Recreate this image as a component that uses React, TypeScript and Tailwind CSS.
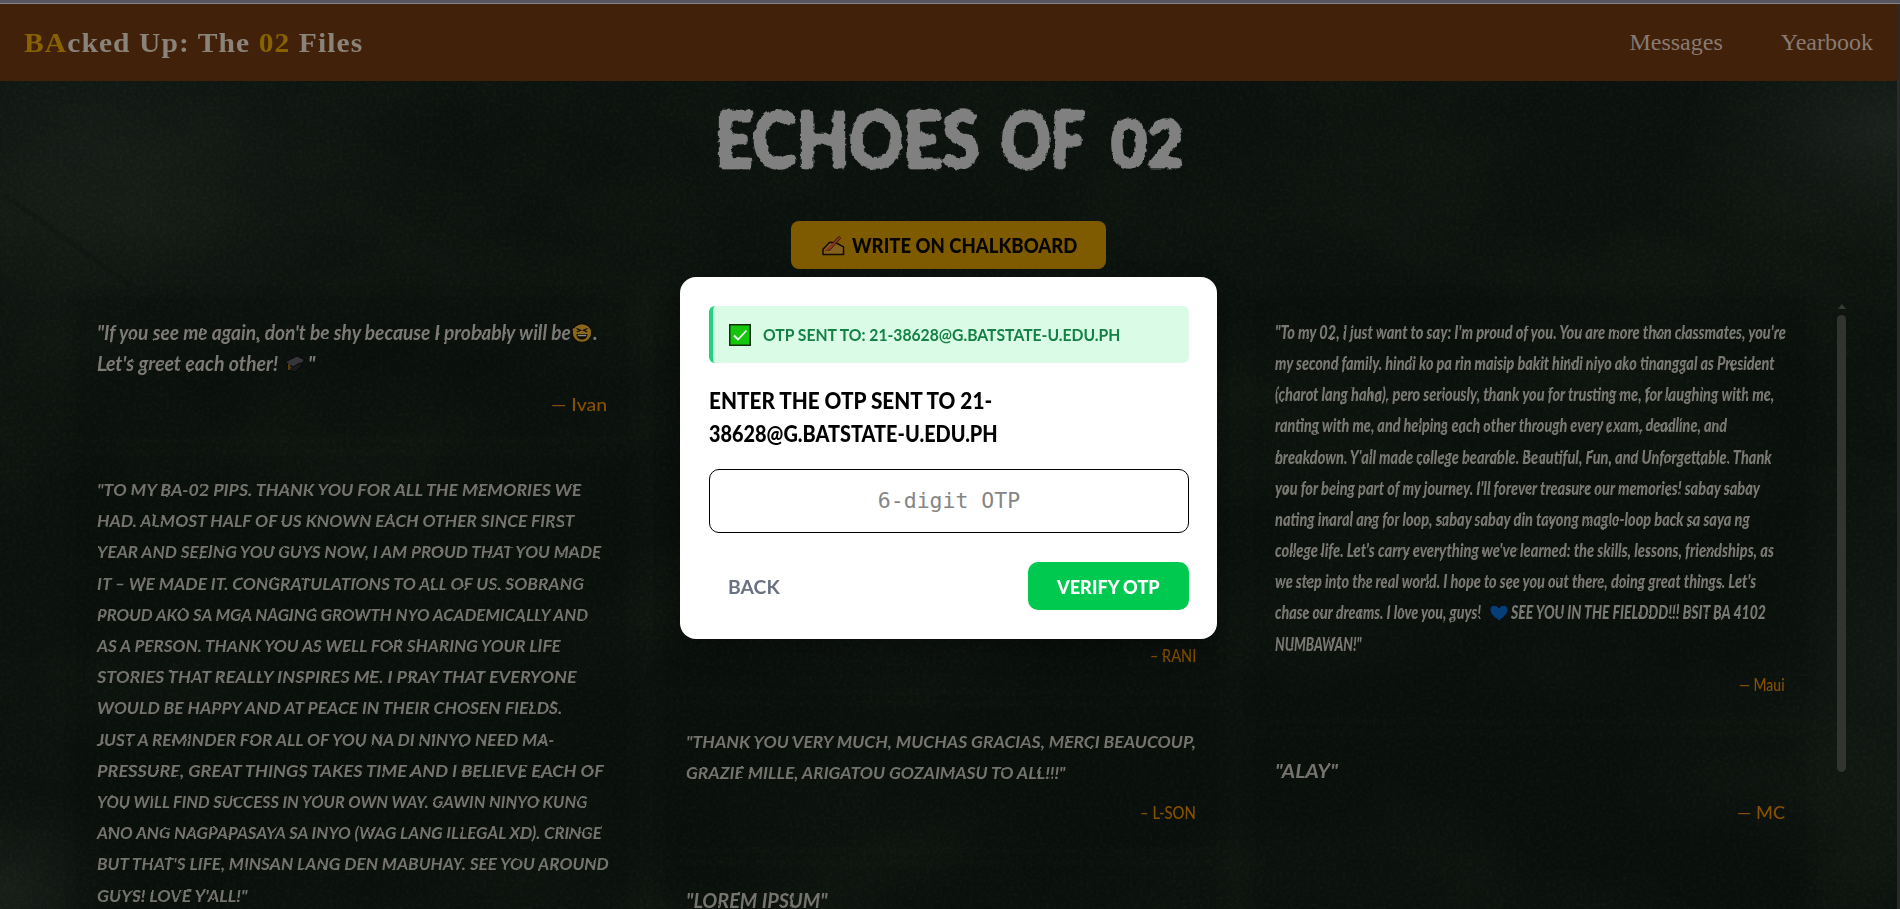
import { ReactNode, useLayoutEffect, useRef } from "react";

/** A single line of text squeezed or stretched to an exact measure. */
function Fit({ w, children, right = false }: { w: number; children: ReactNode; right?: boolean }) {
  const ref = useRef<HTMLSpanElement>(null);
  useLayoutEffect(() => {
    const el = ref.current;
    if (!el) return;
    el.style.transform = "scaleX(" + w / el.offsetWidth + ")";
  }, [w]);
  return (
    <span className={right ? "flex justify-end" : "flex justify-start"} style={{ width: w }}>
      <span
        ref={ref}
        className={
          right
            ? "inline-block shrink-0 origin-right whitespace-pre"
            : "inline-block shrink-0 origin-left whitespace-pre"
        }
      >
        {children}
      </span>
    </span>
  );
}

const pips: [string, number][] = [
  ["\"TO MY BA-02 PIPS. THANK YOU FOR ALL THE MEMORIES WE", 485],
  ["HAD. ALMOST HALF OF US KNOWN EACH OTHER SINCE FIRST", 477],
  ["YEAR AND SEEING YOU GUYS NOW, I AM PROUD THAT YOU MADE", 504],
  ["IT – WE MADE IT. CONGRATULATIONS TO ALL OF US. SOBRANG", 487],
  ["PROUD AKO SA MGA NAGING GROWTH NYO ACADEMICALLY AND", 491],
  ["AS A PERSON. THANK YOU AS WELL FOR SHARING YOUR LIFE", 464],
  ["STORIES THAT REALLY INSPIRES ME. I PRAY THAT EVERYONE", 480],
  ["WOULD BE HAPPY AND AT PEACE IN THEIR CHOSEN FIELDS.", 465],
  ["JUST A REMINDER FOR ALL OF YOU NA DI NINYO NEED MA-", 457],
  ["PRESSURE, GREAT THINGS TAKES TIME AND I BELIEVE EACH OF", 507],
  ["YOU WILL FIND SUCCESS IN YOUR OWN WAY. GAWIN NINYO KUNG", 490],
  ["ANO ANG NAGPAPASAYA SA INYO (WAG LANG ILLEGAL XD). CRINGE", 505],
  ["BUT THAT'S LIFE, MINSAN LANG DEN MABUHAY. SEE YOU AROUND", 512],
  ["GUYS! LOVE Y'ALL!\"", 151],
];

const maui: [string, number][] = [
  ["\"To my 02, I just want to say: I'm proud of you. You are more than classmates, you're", 511],
  ["my second family. hindi ko pa rin maisip bakit hindi niyo ako tinanggal as President", 500],
  ["(charot lang haha), pero seriously, thank you for trusting me, for laughing with me,", 499],
  ["ranting with me, and helping each other through every exam, deadline, and", 452],
  ["breakdown. Y'all made college bearable. Beautiful, Fun, and Unforgettable. Thank", 497],
  ["you for being part of my journey. I'll forever treasure our memories! sabay sabay", 485],
  ["nating inaral ang for loop, sabay sabay din tayong maglo-loop back sa saya ng", 475],
  ["college life. Let's carry everything we've learned: the skills, lessons, friendships, as", 499],
  ["we step into the real world. I hope to see you out there, doing great things. Let's", 481],
];

function Chalkboard() {
  return (
    <svg className="absolute inset-0 h-full w-full" aria-hidden="true">
      <defs>
        <filter id="grain" x="0" y="0" width="100%" height="100%" colorInterpolationFilters="sRGB">
          <feTurbulence type="fractalNoise" baseFrequency="0.3" numOctaves="3" seed="4" />
          <feColorMatrix values="0 0 0 0 0.45  0 0 0 0 0.58  0 0 0 0 0.46  0.13 0 0 0 -0.056" />
        </filter>
        <filter id="cloud" x="0" y="0" width="100%" height="100%" colorInterpolationFilters="sRGB">
          <feTurbulence type="fractalNoise" baseFrequency="0.004 0.006" numOctaves="4" seed="9" />
          <feColorMatrix values="0 0 0 0 0.4  0 0 0 0 0.5  0 0 0 0 0.3  0.12 0 0 0 -0.05" />
        </filter>
        <filter id="rough" x="-2%" y="-5%" width="104%" height="110%" colorInterpolationFilters="sRGB">
          <feGaussianBlur stdDeviation="2" />
          <feComponentTransfer result="round">
            <feFuncA type="linear" slope="5" intercept="-1.7" />
          </feComponentTransfer>
          <feTurbulence type="fractalNoise" baseFrequency="0.16" numOctaves="2" seed="3" result="noise" />
          <feDisplacementMap in="round" in2="noise" scale="4.5" xChannelSelector="R" yChannelSelector="G" />
        </filter>
        <filter id="chalk" x="-2%" y="-2%" width="104%" height="104%" colorInterpolationFilters="sRGB">
          <feTurbulence type="fractalNoise" baseFrequency="0.1" numOctaves="2" seed="7" result="noise" />
          <feDisplacementMap in="SourceGraphic" in2="noise" scale="2" xChannelSelector="R" yChannelSelector="G" />
        </filter>
        <radialGradient id="glow">
          <stop offset="0" stopColor="#8a9a8e" stopOpacity="0.12" />
          <stop offset="0.5" stopColor="#8a9a8e" stopOpacity="0.05" />
          <stop offset="1" stopColor="#8a9a8e" stopOpacity="0" />
        </radialGradient>
      </defs>
      <rect width="100%" height="100%" fill="#0b110d" />
      <rect width="100%" height="100%" filter="url(#cloud)" />
      <ellipse cx="90" cy="150" rx="360" ry="260" fill="url(#glow)" opacity="0.6" />
      <ellipse cx="1885" cy="130" rx="200" ry="130" fill="url(#glow)" />
      <ellipse cx="1885" cy="660" rx="140" ry="220" fill="url(#glow)" opacity="0.4" />
      <ellipse cx="10" cy="890" rx="130" ry="100" fill="url(#glow)" opacity="0.7" />
      <path d="M5 195 L130 285" stroke="#080d0a" strokeWidth="5" opacity="0.25" />
      <rect width="100%" height="100%" filter="url(#grain)" />
    </svg>
  );
}

function WritingHand() {
  return (
    <svg viewBox="0 0 24 22" className="h-[21px] w-[23px]" fill="none">
      <path d="M1 20.5V15L8 7.5L14 8L18 10L22.5 12.5V20.5Z" fill="#84611c" stroke="#120b00" strokeWidth="1.6" strokeLinejoin="round" />
      <path d="M5 16L16 3L18 1.500L19.500 3.500L8 16Z" fill="#803a1c" stroke="#3d1606" strokeWidth="1" />
      <path d="M3 17L12 9" stroke="#8c3c22" strokeWidth="2" />
    </svg>
  );
}

function Laughing() {
  return (
    <svg viewBox="0 0 22 20" className="h-5 w-[22px]">
      <ellipse cx="11" cy="10" rx="9.800" ry="9.300" fill="#8a671a" stroke="#100d05" strokeWidth="1.2" />
      <path d="M5.5 5.5L9.5 7.3L5.8 9M16.5 5.5L12.5 7.3L16.2 9" fill="none" stroke="#120e05" strokeWidth="1.3" />
      <path d="M5.5 11H16.5C16.5 14.8 14.2 16.6 11 16.6S5.5 14.8 5.5 11Z" fill="#120e05" />
      <path d="M6.8 11.8H15.2V13.2H6.8Z" fill="#8a8a80" />
    </svg>
  );
}

function GradCap() {
  return (
    <svg viewBox="0 0 22 18" className="h-[18px] w-[22px]" stroke="#060807" strokeWidth="1">
      <path d="M4 9V15L11 17L17 12V8Z" fill="#1b1b1e" />
      <path d="M1 7L13 1L21 5L9 12Z" fill="#35353b" />
      <path d="M5 9V15" stroke="#7a5208" strokeWidth="1.4" />
    </svg>
  );
}

function Message() {
  return (
    <div className="flex h-[62px] flex-col font-['Lato'] text-[20px] leading-[31px] font-bold text-[#7d7a75] italic">
      <div className="flex items-center">
        <Fit w={474}>{"\"If you see me again, don't be shy because I probably will be"}</Fit>
        <span className="flex"><Laughing /></span>
        <span>.</span>
      </div>
      <div className="flex items-center">
        <Fit w={181}>Let's greet each other!</Fit>
        <span className="ml-1.5 flex"><GradCap /></span>
        <span className="ml-0.5">"</span>
      </div>
    </div>
  );
}

const card =
  "flex flex-col rounded-lg bg-black/10 px-5 shadow-[0_0_14px_rgba(0,0,0,0.15)] *:first:[filter:url(#chalk)]";
const caps = "flex flex-col font-['Lato'] text-[17.5px] leading-[31.2px] font-bold text-[#75736d] italic";
const author = "flex justify-end font-['Lato'] text-[17px] leading-7 font-medium text-[#875000]";

export default function App() {
  return (
    <div className="relative flex h-[909px] w-full flex-col overflow-hidden bg-[#0c120f]">
      <Chalkboard />
      <div className="relative h-1 shrink-0 border-b border-[#80858c] bg-[#57565f]" />
      <div className="relative flex min-h-0 flex-1">
        <div className="flex min-w-0 flex-1 flex-col">
          <header className="flex h-[77px] shrink-0 items-center justify-between bg-[#42210a] pr-6 pl-6 font-['Liberation_Serif']">
            <div className="text-[28px] font-bold text-[#8a8379]">
              <Fit w={339}>
                <span className="tracking-[1px]">
                  <span className="text-[#866200]">BA</span>cked Up: The <span className="text-[#866200]">02</span> Files
                </span>
              </Fit>
            </div>
            <nav className="flex gap-[58px] pb-0.5 text-2xl text-[#877b73]">
              <a>Messages</a>
              <a>Yearbook</a>
            </nav>
          </header>

          <main className="flex min-h-0 flex-1 flex-col">
            <h1 className="flex h-[140px] shrink-0 items-start justify-center pt-[7px] font-['Lato'] text-[78px] leading-[101px] font-black text-[#808080] [filter:url(#rough)] [-webkit-text-stroke:2px_#808080]">
              <Fit w={264}>ECHOES</Fit>
              <span className="ml-[22px]"><Fit w={84}>OF</Fit></span>
              <span className="ml-[26px] text-[65px] leading-[108px]"><Fit w={72}>02</Fit></span>
            </h1>
            <div className="flex shrink-0 justify-center">
              <button className="flex h-12 w-[315px] items-center rounded-lg bg-[#7f5b00] pl-[31px] font-['Lato'] text-[21px] font-black text-[#070500]">
                <WritingHand />
                <span className="ml-[7px]"><Fit w={225}>WRITE ON CHALKBOARD</Fit></span>
              </button>
            </div>

            <div className="mt-[29px] flex min-h-0 flex-1">
              <div className="ml-[77px] flex min-h-0 gap-[39px]">
                <section className="flex w-[550px] flex-col gap-5">
                  <article className={card + " h-[138px] shrink-0 pt-[19px]"}>
                    <Message />
                    <div className={author + " mt-3"}>
                      <Fit w={56} right>— Ivan</Fit>
                    </div>
                  </article>
                  <article className={card + " flex-1 pt-[18px]"}>
                    <div className={caps}>
                      {pips.map(([line, w]) => (
                        <Fit key={line} w={w}>{line}</Fit>
                      ))}
                    </div>
                  </article>
                </section>

                <section className="flex w-[550px] flex-col gap-5">
                  <article className={card + " h-[390px] shrink-0 justify-end pb-[18px]"}>
                    <div className={author}>
                      <Fit w={46} right>– RANI</Fit>
                    </div>
                  </article>
                  <article className={card + " h-[139px] shrink-0 pt-[18px]"}>
                    <div className={caps}>
                      <Fit w={510}>"THANK YOU VERY MUCH, MUCHAS GRACIAS, MERCI BEAUCOUP,</Fit>
                      <Fit w={380}>GRAZIE MILLE, ARIGATOU GOZAIMASU TO ALL!!!"</Fit>
                    </div>
                    <div className={author + " mt-[11px]"}>
                      <Fit w={56} right>– L-SON</Fit>
                    </div>
                  </article>
                  <article className={card + " flex-1 pt-[18px]"}>
                    <div className="font-['Lato'] text-[20px] leading-[31px] font-bold text-[#75736d] italic">
                      <Fit w={142}>"LOREM IPSUM"</Fit>
                    </div>
                  </article>
                </section>

                <section className="flex w-[550px] flex-col gap-5">
                  <article className={card + " h-[419px] shrink-0 pt-[19px]"}>
                    <div className="flex flex-col font-['Lato'] text-[18px] leading-[31.15px] font-black text-[#7a7872] italic">
                      {maui.map(([line, w]) => (
                        <Fit key={line} w={w}>{line}</Fit>
                      ))}
                      <div className="flex items-center">
                        <Fit w={206}>chase our dreams. I love you, guys!</Fit>
                        <svg viewBox="0 0 20 18" className="ml-2 h-[18px] w-5">
                          <path d="M10 17C3 11.5 1 9 1 5.5C1 1 7.5 -.5 10 4C12.500 -.5 19 1 19 5.500C19 9 17 11.500 10 17Z" fill="#063f77" stroke="#05101c" strokeWidth="1" />
                        </svg>
                        <span className="ml-0.5"><Fit w={255}>SEE YOU IN THE FIELDDD!!! BSIT BA 4102</Fit></span>
                      </div>
                      <Fit w={87}>NUMBAWAN!"</Fit>
                    </div>
                    <div className={author + " mt-[11px]"}>
                      <Fit w={46} right>— Maui</Fit>
                    </div>
                  </article>
                  <article className={card + " flex-1 pt-[18px]"}>
                    <div className="font-['Lato'] text-[19px] leading-[31px] font-bold text-[#75736d] italic">
                      <Fit w={63}>"ALAY"</Fit>
                    </div>
                    <div className={author + " mt-[13px] font-bold"}>
                      <Fit w={48} right>— MC</Fit>
                    </div>
                  </article>
                </section>
              </div>

              <div className="ml-8 flex w-[9px] flex-col items-center pt-1.5">
                <svg viewBox="0 0 8 5" className="h-[5px] w-2"><path d="M0 5L4 0L8 5Z" fill="#363936" /></svg>
                <div className="mt-1.5 h-[457px] w-[9px] rounded-full bg-[#31342f]" />
              </div>
            </div>
          </main>
        </div>
        <div className="w-[3px] shrink-0 bg-[#292b2a]" />
      </div>

      <div className="absolute inset-0 flex items-start justify-center pt-[277px] pr-[3px]">
        <div className="flex h-[362px] w-[537px] flex-col rounded-2xl bg-white pt-[29px] pr-7 pl-[29px] font-['Lato'] shadow-[0_10px_24px_rgba(0,0,0,0.3)]">
          <div className="flex h-[57px] shrink-0 items-center rounded-md border-l-[4px] border-[#1fd27c] bg-[#dafce6] pl-4 text-[17px] font-bold text-[#138044]">
            <svg viewBox="0 0 22 22" className="h-[22px] w-[22px]">
              <rect x="0.750" y="0.750" width="20.500" height="20.500" fill="#16c60c" stroke="#12300f" strokeWidth="1.500" />
              <path d="M5 11.500L9 15.500L17.500 6.500" fill="none" stroke="#f2fff0" strokeWidth="1.800" />
            </svg>
            <span className="mt-px ml-3"><Fit w={357}>OTP SENT TO: 21-38628@G.BATSTATE-U.EDU.PH</Fit></span>
          </div>
          <label className="mt-[21px] flex flex-col text-[22px] leading-[33.4px] font-black text-black">
            <Fit w={283}>ENTER THE OTP SENT TO 21-</Fit>
            <Fit w={289}>38628@G.BATSTATE-U.EDU.PH</Fit>
          </label>
          <input
            placeholder="6-digit OTP"
            className="mt-[18px] h-16 w-full shrink-0 rounded-[10px] border border-black text-center font-['DejaVu_Sans_Mono'] text-[21.500px] placeholder:text-[#858585]"
          />
          <div className="mt-[29px] flex h-12 items-center justify-between">
            <button className="mt-0.5 ml-[19px] text-[19px] font-bold text-[#6a7282]">
              <Fit w={52}>BACK</Fit>
            </button>
            <button className="flex h-12 w-[161px] items-center justify-center rounded-[10px] bg-[#00c950] pt-0.5 text-[19px] font-black text-white">
              <Fit w={103}>VERIFY OTP</Fit>
            </button>
          </div>
        </div>
      </div>
    </div>
  );
}
